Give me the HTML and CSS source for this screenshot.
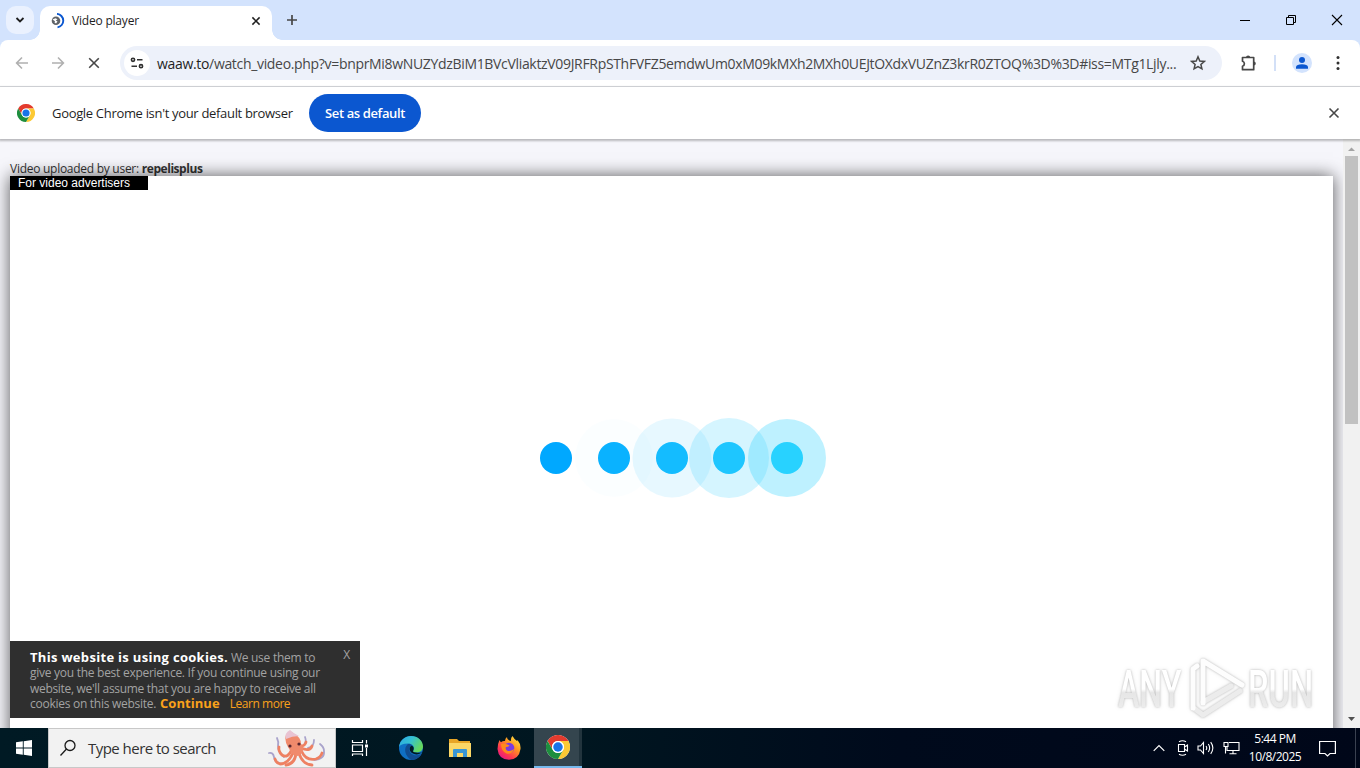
FILE: index.html
```html
<!DOCTYPE html>
<html lang="en">
<head>
  <meta charset="UTF-8">
  <meta name="viewport" content="width=device-width, initial-scale=1.0">
  <title>Video player</title>
  <link rel="stylesheet" href="styles.css">
</head>
<body>
  <!-- Tab strip -->
  <div class="tab-strip">
    <button class="tab-search" aria-label="Search tabs">
      <svg width="10" height="8" viewBox="0 0 10 8"><path d="M1.5 2 5 5.5 8.5 2" fill="none" stroke="#1f1f1f" stroke-width="1.8"/></svg>
    </button>
    <div class="tab">
      <svg class="favicon" width="16" height="16" viewBox="0 0 16 16">
        <circle cx="6" cy="7.8" r="4.3" fill="#5f6368"/>
        <path d="M2.5 6.5 5.5 5.2 7.5 6.2 5.8 7.5 7.5 8.5 6 10.5 4.5 9.5 5 8.3Z" fill="#fff"/>
        <path d="M7 .9A6.8 6.8 0 0 1 7.5 14.4" fill="none" stroke="#0b57d0" stroke-width="1.9"/>
      </svg>
      <span class="tab-title">Video player</span>
      <svg width="10" height="10" viewBox="0 0 10 10"><path d="M1.4 1.4 8.6 8.6M8.6 1.4 1.4 8.6" stroke="#1f1f1f" stroke-width="1.5"/></svg>
    </div>
    <svg class="new-tab" width="12" height="12" viewBox="0 0 12 12"><path d="M6 1V11M1 6H11" stroke="#474747" stroke-width="1.7"/></svg>
    <div class="window-buttons">
      <svg width="12" height="12" viewBox="0 0 12 12"><path d="M1 6.5H11" stroke="#000"/></svg>
      <svg width="12" height="12" viewBox="0 0 12 12"><path d="M1.5 3.5H8.5V10.5H1.5ZM3.5 3.5V1.5H10.5V8.5H8.5" fill="none" stroke="#000"/></svg>
      <svg width="12" height="12" viewBox="0 0 12 12"><path d="M1 1 11 11M11 1 1 11" stroke="#000" stroke-width="1.1"/></svg>
    </div>
  </div>

  <!-- Toolbar -->
  <div class="toolbar">
    <svg class="nav" width="14" height="14" viewBox="0 0 14 14"><path d="M13 7H2M7 1.5 1.6 7 7 12.5" fill="none" stroke="#b0b0b0" stroke-width="1.6"/></svg>
    <svg class="nav" width="14" height="14" viewBox="0 0 14 14"><path d="M1 7H12M7 1.5 12.4 7 7 12.5" fill="none" stroke="#b0b0b0" stroke-width="1.6"/></svg>
    <svg class="nav" width="14" height="14" viewBox="0 0 14 14"><path d="M2.2 2.2 11.8 11.8M11.8 2.2 2.2 11.8" stroke="#474747" stroke-width="1.6"/></svg>
    <div class="address">
      <div class="site-info">
        <svg width="14" height="14" viewBox="0 0 14 14" fill="none" stroke="#303030" stroke-width="1.6"><circle cx="3" cy="3.8" r="1.6"/><path d="M7 3.8H12.5M1.5 10.2H7"/><circle cx="11" cy="10.2" r="1.6"/></svg>
      </div>
      <span class="url"><b>waaw.to</b>/watch_video.php?v=bnprMi8wNUZYdzBiM1BVcVliaktzV09JRFRpSThFVFZ5emdwUm0xM09kMXh2MXh0UEJtOXdxVUZnZ3krR0ZTOQ%3D%3D#iss=MTg1Ljly...</span>
      <svg class="star" width="16" height="16" viewBox="0 0 16 16"><path d="M8 1.8 9.8 6 14.3 6.4 10.9 9.4 11.9 13.8 8 11.5 4.1 13.8 5.1 9.4 1.7 6.4 6.2 6Z" fill="none" stroke="#474747" stroke-width="1.5"/></svg>
    </div>
    <svg class="puzzle" width="18" height="18" viewBox="0 0 18 18"><path d="M2.5 3.5H13.7V15.7H2.5V12.2A2.6 2.6 0 0 0 2.5 7.2Z" fill="none" stroke="#474747" stroke-width="1.7" stroke-linejoin="round"/><path d="M6 3.5A2.1 2.1 0 0 1 10.2 3.5ZM13.7 7.4A2.1 2.1 0 0 1 13.7 11.6Z" fill="#474747"/></svg>
    <span class="divider"></span>
    <svg class="avatar" width="20" height="20" viewBox="0 0 20 20"><circle cx="10" cy="10" r="10" fill="#d3e3fd"/><circle cx="10" cy="7" r="3" fill="#0b57d0"/><path d="M4 15.8V14Q4.5 11.5 10 11.3 15.5 11.5 16 14V15.8Z" fill="#0b57d0"/></svg>
    <svg class="menu" width="4" height="16" viewBox="0 0 4 16" fill="#303030"><circle cx="2" cy="2.5" r="1.5"/><circle cx="2" cy="8" r="1.5"/><circle cx="2" cy="13.5" r="1.5"/></svg>
  </div>

  <!-- Default browser bar -->
  <div class="infobar">
    <svg width="18" height="18" viewBox="0 0 48 48"><use href="#chrome"/></svg>
    <span class="infobar-text">Google Chrome isn't your default browser</span>
    <button class="set-default">Set as default</button>
    <svg class="infobar-close" width="12" height="12" viewBox="0 0 12 12"><path d="M1.5 1.5 10.5 10.5M10.5 1.5 1.5 10.5" stroke="#474747" stroke-width="1.6"/></svg>
  </div>

  <!-- Web page -->
  <div class="viewport">
    <div class="page">
      <p class="uploader">Video uploaded by user: <b>repelisplus</b></p>
      <div class="player">
        <span class="advertisers">For video advertisers</span>
        <svg class="loader" width="290" height="82" viewBox="0 0 290 82">
          <circle cx="78" cy="41" r="39" fill="#0ab4ff" opacity=".015"/>
          <circle cx="136" cy="41" r="39.5" fill="#14beff" opacity=".1"/>
          <circle cx="193" cy="41" r="40" fill="#1ec8ff" opacity=".19"/>
          <circle cx="251" cy="41" r="39" fill="#28d2ff" opacity=".3"/>
          <circle cx="20" cy="41" r="16" fill="#00a8ff"/>
          <circle cx="78" cy="41" r="16" fill="#0ab2ff"/>
          <circle cx="136" cy="41" r="16" fill="#14bcff"/>
          <circle cx="193" cy="41" r="16" fill="#1ec6ff"/>
          <circle cx="251" cy="41" r="16" fill="#28d2ff"/>
        </svg>
        <div class="cookies">
          <span class="cookies-close">X</span>
          <p><strong>This website is using cookies.</strong> We use them to<br>give you the best experience. If you continue using our<br><span class="tight">website, we'll assume that you are happy to receive all</span><br>cookies on this website. <a class="continue">Continue</a><a class="more">Learn more</a></p>
        </div>
        <svg class="watermark" width="214" height="76" viewBox="0 0 214 76">
          <defs>
            <linearGradient id="fade" x1="0" y1="0" x2="0" y2="1"><stop offset=".5" stop-color="#fff"/><stop offset=".56" stop-color="#e6e6e6"/><stop offset="1" stop-color="#f1f1f1"/></linearGradient>
          </defs>
          <g class="mark-text">
            <text transform="translate(5 54) scale(.63 1)">ANY</text>
            <text transform="translate(135 54) scale(.64 1)">RUN</text>
          </g>
          <g class="mark-play">
            <path class="dim" d="M82 56 90 62 127 38"/>
            <path class="dim" d="M90 49 118 33"/>
            <path d="M80 55V16L84 13"/>
            <path d="M90 50V8L129 32"/>
          </g>
        </svg>
      </div>
    </div>
    <div class="scrollbar">
      <svg width="17" height="14" viewBox="0 0 17 14"><path d="M5 9 8.5 5.5 12 9Z" fill="#a3a3a3"/></svg>
      <div class="thumb"></div>
      <svg class="down" width="17" height="17" viewBox="0 0 17 17"><path d="M5 6 8.5 10 12 6Z" fill="#505050"/></svg>
    </div>
  </div>

  <!-- Taskbar -->
  <div class="taskbar">
    <div class="start">
      <svg width="16" height="16" viewBox="0 0 16 16" fill="#fff"><path d="M0 2.3 6.8 1.3V7.5H0ZM7.7 1.2 16 0V7.5H7.7ZM0 8.5H6.8V14.7L0 13.7ZM7.7 8.5H16V16L7.7 14.8Z"/></svg>
    </div>
    <div class="search">
      <svg width="18" height="18" viewBox="0 0 18 18" fill="none" stroke="#1a1a1a" stroke-width="1.3"><circle cx="11" cy="6.5" r="5"/><path d="M7.5 10 1.5 16.5"/></svg>
      <span>Type here to search</span>
      <svg class="octopus" width="60" height="37" viewBox="0 0 60 37" fill="none" stroke-linecap="round">
        <g stroke="#a9a3cb" stroke-width="1.8">
          <path d="M14 34Q7 33 6 27 5 22 1 23"/>
          <path d="M16 27Q10 22 10 16 11 12 9 8"/>
          <path d="M46 30Q57 29 56 21 56 17 52 14"/>
          <path d="M40 18Q46 17 46 10M36 15Q39 12 37 7"/>
        </g>
        <g stroke="#ee8162" stroke-width="2.8">
          <path d="M25 23Q20 34 12 34 8 33 7 29"/>
          <path d="M24 19Q20 29 14 25 10 21 11 17"/>
          <path d="M28 23Q27 34 18 35"/>
          <path d="M31 23Q34 34 44 35"/>
          <path d="M34 22Q38 31 48 29 53 27 54 23"/>
          <path d="M33 18Q42 22 44 16"/>
          <path d="M33 16Q37 16 38 12"/>
        </g>
        <path d="M20 17Q16 10 18 5 22 -1 26 4 33 7 33 14 38 20 32 25 27 28 23 22Z" fill="#f08a6c"/>
        <path d="M18 9Q16 3 22 0 25 3 31 6 24 6 18 9Z" fill="#e9c3d2"/>
        <circle cx="22" cy="16" r="1.6" fill="#5a2730"/><circle cx="31" cy="14" r="1.6" fill="#5a2730"/>
      </svg>
    </div>
    <div class="task first">
      <svg width="18" height="16" viewBox="0 0 18 16" fill="none" stroke="#fff" stroke-width="1.2"><path d="M1.5 0V2.5H11.5V0M1.5 5H11.5V11.5H1.5ZM1.5 16V14H11.5V16M15.5 0V3.5M15.5 8V16"/><path d="M14 4.5H17V7.5H14Z" fill="#fff" stroke="none"/></svg>
    </div>
    <div class="task">
      <svg width="24" height="24" viewBox="0 0 24 24">
        <defs>
          <linearGradient id="edgeTop" x1="0" y1="0" x2="1" y2=".5"><stop offset="0" stop-color="#2ba7e5"/><stop offset=".5" stop-color="#35c1d2"/><stop offset="1" stop-color="#66d85c"/></linearGradient>
        </defs>
        <circle cx="12" cy="12" r="12" fill="#0f6fc4"/>
        <path d="M0 11C1 4 6 0 12 0 19 0 24 5 24 10.5 24 15 20.5 16.5 17 16.5 14 16.5 13.5 15.5 14.5 14 16 10 13 7.5 9 7.5 4 7.5 1 9 0 11Z" fill="url(#edgeTop)"/>
        <path d="M9 8C4 12 6 20 12 23.9 17 24 20.5 21.5 22.5 18.2 15 21.5 9.5 17 10.5 12.5 11 10 12 9.5 12.5 9 11.5 8 10.5 7.7 9 8Z" fill="#104c91"/>
        <path d="M12.5 9.5C9.8 11.5 10.2 15 13 17 16 19 20 19 23.4 16 21 17 19 17 17 16.5 14 16.3 13.4 15.5 14.5 14 15.2 12 14.5 10.3 12.5 9.5Z" fill="#001a24"/>
      </svg>
    </div>
    <div class="task">
      <svg width="22" height="20" viewBox="0 0 22 20"><path d="M0 1H8L10 3H21V19H0Z" fill="#e8a526"/><path d="M0 5H22V19H0Z" fill="#fcd766"/><path d="M4 19V12Q4 11 5 11H17Q18 11 18 12V19H14V15H8V19Z" fill="#3a96d4"/></svg>
    </div>
    <div class="task">
      <svg width="24" height="24" viewBox="0 0 24 24">
        <defs>
          <linearGradient id="fire" x1="1" y1="0" x2=".2" y2="1"><stop offset="0" stop-color="#fff44f"/><stop offset=".4" stop-color="#ff9a1f"/><stop offset=".75" stop-color="#ff3750"/><stop offset="1" stop-color="#e31587"/></linearGradient>
        </defs>
        <path d="M2.5 4Q3 5.5 4 6.2 6 4.5 8 5 8 2.5 10 1 10 4 14 5 13.5 2 15.5 0 17 3 20 5 20.5 4.5 20.5 4 24 8 23.5 13 22 23.5 12 23.8 1.5 23.5 .5 13 .5 8 2.5 4Z" fill="url(#fire)"/>
        <circle cx="12" cy="12" r="5.3" fill="#7a3be0"/>
        <path d="M4 8Q9 7 12.5 9.5 11.5 11 9 11 8 13 10 14.5 13 16 17 13 15 19 9.5 17.5 4 15 4 8Z" fill="#ff8a1c"/>
      </svg>
    </div>
    <div class="task active">
      <svg width="24" height="24" viewBox="0 0 48 48">
        <g id="chrome">
          <circle cx="24" cy="24" r="24" fill="#fff"/>
          <path d="M24 12H44.8A24 24 0 0 0 3.2 12L13.6 30A12 12 0 0 1 24 12Z" fill="#e33b2e"/>
          <path d="M34.4 30 24 48A24 24 0 0 0 44.8 12H24A12 12 0 0 1 34.4 30Z" fill="#fcc934"/>
          <path d="M13.6 30 3.2 12A24 24 0 0 0 24 48L34.4 30A12 12 0 0 1 13.6 30Z" fill="#1e8e3e"/>
          <circle cx="24" cy="24" r="12" fill="#fff"/>
          <circle cx="24" cy="24" r="9.5" fill="#1a73e8"/>
        </g>
      </svg>
    </div>
    <div class="tray">
      <svg class="chevron" width="12" height="8" viewBox="0 0 12 8"><path d="M.7 6.8 6 1.5 11.3 6.8" fill="none" stroke="#fff" stroke-width="1.2"/></svg>
      <svg class="camera" width="14" height="16" viewBox="0 0 14 16" fill="none" stroke="#fff" stroke-width="1.1"><path d="M2.5 4.5H8.5V11.5H2.5ZM8.5 7 11.5 5V11L8.5 9M3 1.8Q6.5-.3 10 1.8M3 14.2Q6.5 16.3 10 14.2"/></svg>
      <svg width="18" height="14" viewBox="0 0 18 14" fill="none" stroke="#fff" stroke-width="1.1"><path d="M1 5H3.5L6.5 1.5V12.5L3.5 9H1ZM9 5Q10.5 7 9 9M11.3 3Q14 7 11.3 11M13.7 1.2Q18 7 13.7 12.8"/></svg>
      <svg width="17" height="14" viewBox="0 0 17 14" fill="none" stroke="#fff" stroke-width="1.1"><path d="M6 1.5H16V9.5H4V6M1 1.5H5V5.5H1ZM2.5 5.5V12.5M10 9.5V12.5M6.5 12.8H13.5"/></svg>
      <div class="clock"><span>5:44 PM</span><span>10/8/2025</span></div>
      <svg class="notify" width="17" height="17" viewBox="0 0 17 17"><path d="M.6 1.5H16.4V13.5H11L8.5 16 6 13.5H.6Z" fill="none" stroke="#fff" stroke-width="1.2"/></svg>
    </div>
  </div>
</body>
</html>
```
FILE: styles.css
```css
* {
  box-sizing: border-box;
}
body {
  margin: 0;
  width: 1360px;
  height: 768px;
  overflow: hidden;
  display: flex;
  flex-direction: column;
  background-color: #d3e3fd;
  font-family: "Open Sans", "Noto Sans", sans-serif;
  color: #1f1f1f;
  white-space: nowrap;
}
svg {
  display: block;
  flex-shrink: 0;
}
button {
  border: 0;
  padding: 0;
  font-family: inherit;
}

/* Tab strip */
.tab-strip {
  height: 40px;
  display: flex;
  align-items: center;
  padding-left: 6px;
}
.tab-search {
  width: 28px;
  height: 28px;
  border-radius: 10px;
  background-color: #eaf1fe;
  display: flex;
  align-items: center;
  justify-content: center;
}
.tab {
  position: relative;
  align-self: flex-end;
  width: 232px;
  height: 34px;
  margin-left: 6px;
  padding: 0 11px 5px 10px;
  display: flex;
  align-items: center;
  background-color: #fff;
  border-radius: 10px 10px 0 0;
}
.tab::before,
.tab::after {
  content: "";
  position: absolute;
  bottom: 0;
  width: 10px;
  height: 10px;
}
.tab::before {
  left: -10px;
  background: radial-gradient(circle at 0 0, transparent 9.5px, #fff 10px);
}
.tab::after {
  right: -10px;
  background: radial-gradient(circle at 100% 0, transparent 9.5px, #fff 10px);
}
.tab-title {
  flex: 1;
  margin-left: 6px;
  font-size: 12px;
  letter-spacing: -0.2px;
}
.new-tab {
  margin-left: 14px;
}
.window-buttons {
  display: flex;
  gap: 34px;
  margin-left: auto;
  padding-right: 17px;
}

/* Toolbar */
.toolbar {
  height: 47px;
  display: flex;
  align-items: center;
  padding: 0 20px 0 15px;
  background-color: #fff;
  border-bottom: 1px solid #dfe1e5;
  border-radius: 8px 8px 0 0;
}
.nav {
  margin-right: 22px;
}
.address {
  width: 1102px;
  height: 34px;
  margin-left: -3px;
  padding: 0 16px 0 4px;
  display: flex;
  align-items: center;
  background-color: #edf1fa;
  border-radius: 17px;
}
.site-info {
  width: 26px;
  height: 26px;
  border-radius: 50%;
  background-color: #fff;
  display: flex;
  align-items: center;
  justify-content: center;
}
.url {
  margin-left: 7px;
  font-size: 14px;
  letter-spacing: -0.325px;
  color: #474747;
}
.url b {
  font-weight: 400;
  color: #1f1f1f;
}
.star {
  margin-left: auto;
}
.puzzle {
  margin-left: 18px;
}
.divider {
  width: 2px;
  height: 16px;
  margin-left: 16px;
  background-color: #d3e0f7;
}
.avatar {
  margin-left: 16px;
}
.menu {
  margin-left: auto;
}

/* Default browser bar */
.infobar {
  position: relative;
  z-index: 1;
  height: 52px;
  display: flex;
  align-items: center;
  padding: 0 20px 0 17px;
  background-color: #fff;
  box-shadow: 0 1px 2px 1px rgba(0, 0, 0, 0.25);
}
.infobar-text {
  width: 241px;
  margin-left: 17px;
  font-size: 13px;
  letter-spacing: -0.32px;
}
.set-default {
  width: 112px;
  height: 38px;
  margin-left: 16px;
  border-radius: 19px;
  background-color: #0b57d0;
  color: #fff;
  font-size: 13px;
  font-weight: 600;
  letter-spacing: -0.38px;
}
.infobar-close {
  margin-left: auto;
}

/* Web page */
.viewport {
  height: 589px;
  display: flex;
}
.page {
  flex: 1;
  padding: 22px 10px 0;
  overflow: hidden;
  background-color: #f6f6fb;
}
.uploader {
  height: 15px;
  margin: 0;
  font-size: 12px;
  line-height: 16px;
  letter-spacing: -0.27px;
  color: #333;
}
.uploader b {
  letter-spacing: -0.45px;
}
.player {
  position: relative;
  height: 600px;
  background-color: #fff;
  box-shadow: 0 0 16px rgba(0, 0, 0, 0.65);
}
.advertisers {
  display: block;
  width: 138px;
  height: 14px;
  padding-left: 8px;
  background-color: #000;
  color: #fff;
  font-family: "Liberation Sans", Arial, sans-serif;
  font-size: 12px;
  line-height: 14px;
}
.loader {
  position: absolute;
  left: 526px;
  top: 241px;
}
.cookies {
  position: absolute;
  left: 0;
  top: 465px;
  width: 350px;
  height: 77px;
  padding: 9px 20px;
  background-color: #2f2f2f;
  color: #a3a3a3;
  font-size: 12px;
  line-height: 15.3px;
  letter-spacing: -0.27px;
}
.cookies p {
  margin: 0;
}
.cookies strong {
  color: #fff;
  font-size: 13px;
  font-weight: 700;
  letter-spacing: 0.31px;
}
.tight {
  letter-spacing: -0.31px;
}
.cookies-close {
  position: absolute;
  right: 10px;
  top: 6px;
}
.continue {
  margin-left: 1px;
  color: #f9a11b;
  font-size: 13px;
  font-weight: 700;
  letter-spacing: 0.05px;
}
.more {
  margin-left: 10px;
  color: #f9a11b;
  letter-spacing: -0.45px;
}
.watermark {
  position: absolute;
  left: 1103px;
  top: 477px;
  filter: drop-shadow(0 0 1px rgba(0, 0, 0, 0.22)) drop-shadow(0 0 2px rgba(0, 0, 0, 0.1));
}
.mark-text {
  font-family: Roboto, sans-serif;
  font-size: 51px;
  font-weight: 500;
  fill: url(#fade);
}
.mark-play {
  fill: none;
  stroke: #fdfdfd;
  stroke-width: 5;
  stroke-linejoin: round;
  stroke-linecap: round;
}
.dim {
  stroke: #ececec;
}
.scrollbar {
  width: 17px;
  display: flex;
  flex-direction: column;
  align-items: center;
  padding-top: 3px;
  background-color: #f1f1f1;
}
.thumb {
  width: 13px;
  height: 268px;
  background-color: #c1c1c1;
}
.down {
  margin-top: auto;
}

/* Taskbar */
.taskbar {
  height: 40px;
  display: flex;
  background: linear-gradient(90deg, #001a24 0, #001620 580px, #000a1c 900px, #000719 100%);
  color: #fff;
}
.start {
  width: 48px;
  display: flex;
  align-items: center;
  justify-content: center;
}
.search {
  width: 288px;
  padding-left: 10px;
  display: flex;
  align-items: center;
  background-color: #f2f2f2;
  border: 1px solid #c8c8c8;
  color: #333;
  font-size: 15px;
  letter-spacing: -0.53px;
}
.search span {
  margin-left: 11px;
}
.octopus {
  margin-left: auto;
  margin-right: 7px;
}
.task {
  width: 49px;
  display: flex;
  align-items: center;
  justify-content: center;
}
.first {
  width: 50px;
  padding-right: 2px;
}
.active {
  width: 48px;
  margin-left: 1px;
  background-color: #34454e;
  border-bottom: 2px solid #76b9ed;
  box-shadow: inset -3px 0 #22343d;
}
.tray {
  display: flex;
  align-items: center;
  gap: 8px;
  margin-left: auto;
  margin-right: 4px;
  padding-right: 19px;
  border-right: 1px solid #3a4150;
}
.chevron {
  margin-right: 3px;
}
.camera {
  margin-right: -1px;
}
.clock {
  width: 54px;
  display: flex;
  flex-direction: column;
  align-items: center;
  font-size: 12px;
  line-height: 18px;
  letter-spacing: -0.5px;
}
.notify {
  margin-left: 9px;
}
```
